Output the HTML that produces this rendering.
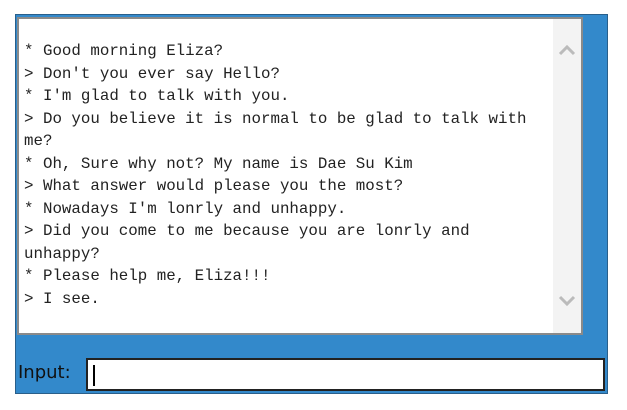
<!DOCTYPE html>
<html><head><style>
body{margin:0;width:627px;height:410px;background:#fff;position:relative;overflow:hidden}
.panel{position:absolute;left:15px;top:14px;width:593px;height:380px;background:#3389cb;border:1px solid #2a5f8a;box-sizing:border-box}
.ta{position:absolute;left:17px;top:17px;width:566px;height:318px;background:#fff;border:2px solid #8a8a8a;box-sizing:border-box}
.sb{position:absolute;right:0;top:0;width:28px;height:100%;background:#f3f3f3}
.txt{position:absolute;left:5px;top:21px;font-family:"Liberation Mono",monospace;font-size:15.8px;letter-spacing:0;line-height:22.5px;color:#222;white-space:pre}
.lbl{position:absolute;left:18px;top:362px;font-family:"DejaVu Sans",sans-serif;font-size:18px;color:#111}
.inp{position:absolute;left:86px;top:358px;width:519px;height:33px;background:#fff;border:2px solid #222;box-sizing:border-box}
.cur{position:absolute;left:5px;top:5px;width:2px;height:21px;background:#000}
</style></head><body>
<div class="panel"></div>
<div class="ta"><div class="sb">
<svg width="28" height="314" style="position:absolute;left:0;top:0"><polyline points="7,35 14,28 21,35" fill="none" stroke="#bbb" stroke-width="3"/><polyline points="7,278 14,285 21,278" fill="none" stroke="#bbb" stroke-width="3"/></svg>
</div>
<div class="txt">* Good morning Eliza?
> Don't you ever say Hello?
* I'm glad to talk with you.
> Do you believe it is normal to be glad to talk with
me?
* Oh, Sure why not? My name is Dae Su Kim
> What answer would please you the most?
* Nowadays I'm lonrly and unhappy.
> Did you come to me because you are lonrly and
unhappy?
* Please help me, Eliza!!!
> I see.</div></div>
<div class="lbl">Input:</div>
<div class="inp"><div class="cur"></div></div>
</body></html>
